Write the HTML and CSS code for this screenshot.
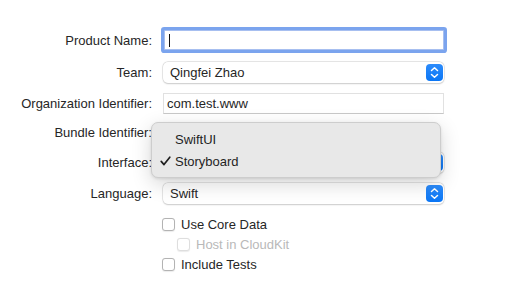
FILE: index.html
```html
<!DOCTYPE html>
<html lang="en">
<head>
    <meta charset="UTF-8">
    <title>Choose options for your new project</title>
    <link rel="stylesheet" href="styles.css">
</head>
<body>

<div class="form">
    <label class="label">Product Name:</label>
    <div class="control">
        <div class="text-field focused"><span class="caret"></span></div>
    </div>

    <label class="label">Team:</label>
    <div class="control">
        <div class="popup"><span>Qingfei Zhao</span><span class="stepper"><svg width="9" height="13" viewBox="0 0 9 13"><path d="M1.5 4.5 L4.5 1.8 L7.5 4.5 M1.5 8.5 L4.5 11.2 L7.5 8.5" /></svg></span></div>
    </div>

    <label class="label">Organization Identifier:</label>
    <div class="control">
        <div class="text-field">com.test.www</div>
    </div>

    <label class="label">Bundle Identifier:</label>
    <div class="control"></div>

    <label class="label">Interface:</label>
    <div class="control anchor">
        <div class="popup"><span></span><span class="stepper"><svg width="9" height="13" viewBox="0 0 9 13"><path d="M1.5 4.5 L4.5 1.8 L7.5 4.5 M1.5 8.5 L4.5 11.2 L7.5 8.5" /></svg></span></div>

        <!-- open menu for the Interface popup -->
        <div class="menu">
            <div class="menu-item"><span class="check"></span>SwiftUI</div>
            <div class="menu-item"><span class="check"><svg width="11" height="10" viewBox="0 0 11 10"><path d="M1.2 5.4 L4 8.6 L9.8 1.2" /></svg></span>Storyboard</div>
        </div>
    </div>

    <label class="label">Language:</label>
    <div class="control">
        <div class="popup"><span>Swift</span><span class="stepper"><svg width="9" height="13" viewBox="0 0 9 13"><path d="M1.5 4.5 L4.5 1.8 L7.5 4.5 M1.5 8.5 L4.5 11.2 L7.5 8.5" /></svg></span></div>
    </div>
</div>

<div class="options">
    <div class="option"><span class="box"></span>Use Core Data</div>
    <div class="option sub disabled"><span class="box"></span>Host in CloudKit</div>
    <div class="option"><span class="box"></span>Include Tests</div>
</div>

</body>
</html>
```

FILE: styles.css
```css
body {
    margin: 0;
    padding: 29px 0 0 8px;
    background: #ffffff;
    color: #262626;
    font-family: 'Liberation Sans', Arial, sans-serif;
    font-size: 13px;
    width: 526px;
    height: 298px;
    box-sizing: border-box;
    overflow: hidden;
}

.form {
    display: grid;
    grid-template-columns: 144px 281px;
    grid-template-rows: 22px 22px 21px 17px 22px 21px;
    column-gap: 11px;
    row-gap: 10px;
}

.label {
    display: flex;
    align-items: center;
    justify-content: flex-end;
    white-space: nowrap;
}

.control {
    display: flex;
    align-items: center;
}

.anchor {
    position: relative;
}

.text-field {
    box-sizing: border-box;
    width: 100%;
    height: 21px;
    padding: 0 3px;
    display: flex;
    align-items: center;
    background: #ffffff;
    border: 1px solid #e1e1e1;
    border-bottom-color: #c8c8c8;
}

.text-field.focused {
    height: 20px;
    border: 1px solid #a7bff0;
    box-shadow: 0 0 0 3px #7ba4ee;
    border-radius: 1px;
    margin-left: 1px;
    width: 280px;
}

.caret {
    width: 1px;
    height: 13px;
    background: #111111;
    margin-left: 1px;
}

.popup {
    box-sizing: border-box;
    width: 100%;
    height: 21px;
    display: flex;
    align-items: center;
    justify-content: space-between;
    padding: 0 1px 0 7px;
    background: #ffffff;
    border-radius: 5px;
    box-shadow: 0 0 0 0.5px #d4d4d4, 0 0.5px 1.5px rgba(0, 0, 0, 0.22);
}

.stepper {
    width: 17px;
    height: 17px;
    border-radius: 4px;
    background: linear-gradient(#2d8cfb, #0a76f5);
    display: flex;
    align-items: center;
    justify-content: center;
}

.stepper svg path {
    fill: none;
    stroke: #ffffff;
    stroke-width: 1.5;
    stroke-linecap: round;
    stroke-linejoin: round;
}

.menu {
    position: absolute;
    left: -12px;
    top: -29px;
    width: 290px;
    box-sizing: border-box;
    padding: 5px 0 5px;
    background: #e8e8e8;
    border: 1px solid #cdcdcd;
    border-radius: 7px;
    box-shadow: 0 6px 20px rgba(0, 0, 0, 0.16), 0 1px 3px rgba(0, 0, 0, 0.1);
}

.menu-item {
    height: 22px;
    display: flex;
    align-items: center;
    color: #1f1f1f;
}

.check {
    width: 23px;
    height: 22px;
    display: flex;
    align-items: center;
    padding-left: 8px;
    box-sizing: border-box;
}

.check svg path {
    fill: none;
    stroke: #1f1f1f;
    stroke-width: 1.7;
    stroke-linecap: round;
    stroke-linejoin: round;
}

.options {
    margin: 10px 0 0 154px;
    display: flex;
    flex-direction: column;
}

.option {
    height: 20px;
    display: flex;
    align-items: center;
    gap: 6px;
}

.option.sub {
    margin-left: 15px;
}

.option.disabled {
    color: #b9b9b9;
}

.box {
    width: 11px;
    height: 11px;
    border: 1px solid #b3b3b3;
    border-radius: 3px;
    background: #ffffff;
    box-shadow: 0 0.5px 1px rgba(0, 0, 0, 0.08);
}

.option.disabled .box {
    border-color: #dedede;
}
```
